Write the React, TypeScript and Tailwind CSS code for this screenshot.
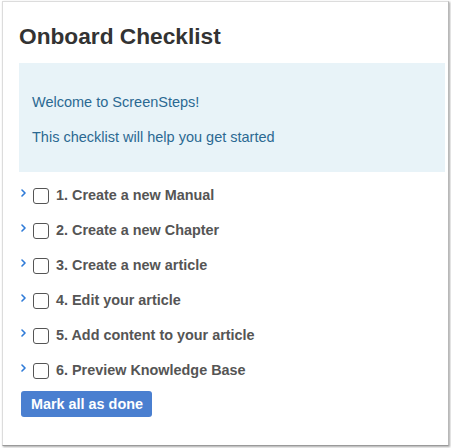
const steps = [
  "1. Create a new Manual",
  "2. Create a new Chapter",
  "3. Create a new article",
  "4. Edit your article",
  "5. Add content to your article",
  "6. Preview Knowledge Base",
];

function Chevron() {
  return (
    <svg
      width="5"
      height="8"
      viewBox="0 0 5 8"
      className="mt-[4.5px] mr-[7px] shrink-0"
      fill="none"
    >
      <path
        d="M1 1 L4 4 L1 7"
        stroke="#2f7bd8"
        strokeWidth="1.6"
        strokeLinecap="round"
        strokeLinejoin="round"
      />
    </svg>
  );
}

export default function App() {
  return (
    <div className="h-[448px] w-[451px] bg-white font-['Liberation_Sans',Arial,sans-serif]">
      <div className="ml-[2px] mt-[1px] h-[445px] w-[447px] border border-[#dcdcdc] border-b-[#9a9a9a] border-r-[#b8b8b8] bg-white pl-[16px] pr-[3px] pt-[20px] shadow-[1px_1px_2px_rgba(0,0,0,0.35)]">
        <h1 className="text-[22.7px] font-bold leading-[28px] text-[#333]">
          Onboard Checklist
        </h1>

        {/* welcome panel */}
        <div className="mt-[13px] flex flex-col gap-[15px] bg-[#e8f3f8] pb-[25px] pl-[13px] pt-[29px] text-[14.5px] leading-[20px] text-[#2b6992]">
          <p>Welcome to ScreenSteps!</p>
          <p>This checklist will help you get started</p>
        </div>

        <ul className="mt-[12.5px] flex flex-col gap-[15px]">
          {steps.map((s) => (
            <li key={s} className="flex h-[20px] items-start pl-[2px]">
              <Chevron />
              <span className="mt-[3.5px] mr-[7px] h-[16px] w-[16px] shrink-0 rounded-[3px] border-[1.5px] border-[#555]" />
              <span className="text-[14.4px] font-bold leading-[20px] text-[#555]">
                {s}
              </span>
            </li>
          ))}
        </ul>

        <button className="ml-[2px] mt-[11.5px] h-[26px] w-[131px] rounded-[3px] bg-[#4a7fd0] pl-[1px] text-left text-[14.4px] font-bold leading-[26px] text-white">
          <span className="pl-[9px]">Mark all as done</span>
        </button>
      </div>
    </div>
  );
}
